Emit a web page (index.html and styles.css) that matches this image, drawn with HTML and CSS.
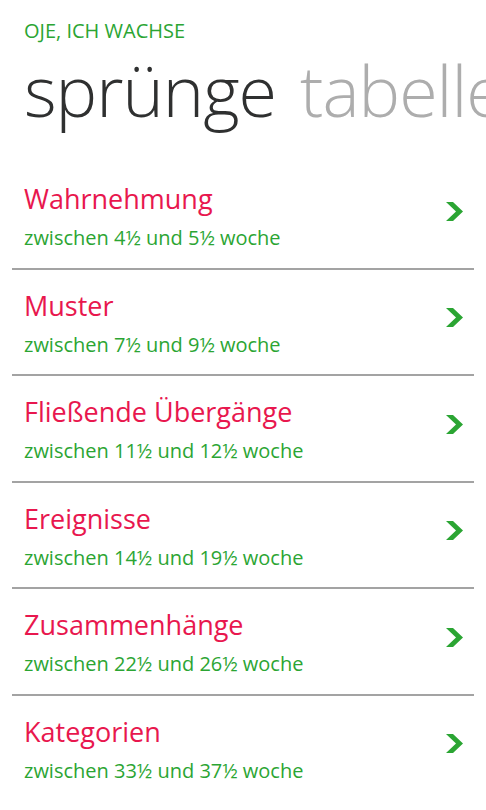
FILE: index.html
```html
<!DOCTYPE html>
<html>
<head>
    <meta name="viewport" content="width=device-width, initial-scale=1">
    <title>Oje, ich wachse</title>
    <link rel="stylesheet" href="styles.css">
</head>
<body>
<div class="app-title">OJE, ICH WACHSE</div>

<div class="pivot">
    <span class="pivot-item active">sprünge</span>
    <span class="pivot-item">tabelle</span>
</div>

<ul class="leaps">
    <li class="leap">
        <div class="leap-text">
            <div class="leap-name">Wahrnehmung</div>
            <div class="leap-weeks">zwischen 4½ und 5½ woche</div>
        </div>
        <svg class="chevron" width="17" height="19" viewBox="0 0 17 19"><path d="M0 0H7L17 9.5L7 19H0L10 9.5Z"/></svg>
    </li>
    <li class="leap">
        <div class="leap-text">
            <div class="leap-name">Muster</div>
            <div class="leap-weeks">zwischen 7½ und 9½ woche</div>
        </div>
        <svg class="chevron" width="17" height="19" viewBox="0 0 17 19"><path d="M0 0H7L17 9.5L7 19H0L10 9.5Z"/></svg>
    </li>
    <li class="leap">
        <div class="leap-text">
            <div class="leap-name">Fließende Übergänge</div>
            <div class="leap-weeks">zwischen 11½ und 12½ woche</div>
        </div>
        <svg class="chevron" width="17" height="19" viewBox="0 0 17 19"><path d="M0 0H7L17 9.5L7 19H0L10 9.5Z"/></svg>
    </li>
    <li class="leap">
        <div class="leap-text">
            <div class="leap-name">Ereignisse</div>
            <div class="leap-weeks">zwischen 14½ und 19½ woche</div>
        </div>
        <svg class="chevron" width="17" height="19" viewBox="0 0 17 19"><path d="M0 0H7L17 9.5L7 19H0L10 9.5Z"/></svg>
    </li>
    <li class="leap">
        <div class="leap-text">
            <div class="leap-name">Zusammenhänge</div>
            <div class="leap-weeks">zwischen 22½ und 26½ woche</div>
        </div>
        <svg class="chevron" width="17" height="19" viewBox="0 0 17 19"><path d="M0 0H7L17 9.5L7 19H0L10 9.5Z"/></svg>
    </li>
    <li class="leap">
        <div class="leap-text">
            <div class="leap-name">Kategorien</div>
            <div class="leap-weeks">zwischen 33½ und 37½ woche</div>
        </div>
        <svg class="chevron" width="17" height="19" viewBox="0 0 17 19"><path d="M0 0H7L17 9.5L7 19H0L10 9.5Z"/></svg>
    </li>
</ul>
</body>
</html>
```

FILE: styles.css
```css
html, body {
    overflow: hidden;
}

body {
    margin: 0;
    background-color: #ffffff;
    font-family: "Open Sans", "Noto Sans", sans-serif;
}

.app-title {
    padding: 18px 24px 0 24px;
    font-size: 20px;
    line-height: 26px;
    color: #2ba533;
}

.pivot {
    display: flex;
    gap: 24px;
    padding: 0 24px;
    white-space: nowrap;
    font-size: 70px;
    font-weight: 300;
    line-height: 92px;
    letter-spacing: -1px;
}

.pivot-item {
    color: #adadad;
}

.pivot-item.active {
    color: #2f3030;
}

.leaps {
    list-style: none;
    margin: 27px 12px 0 12px;
    padding: 0;
}

.leap {
    display: flex;
    align-items: center;
    justify-content: space-between;
    height: 104.5px;
    padding: 0 11px 0 12px;
    border-bottom: 2px solid #a3a3a3;
}

.leap:last-child {
    border-bottom: none;
}

.leap-name {
    font-size: 27px;
    line-height: 40px;
    color: #e8174e;
}

.leap-weeks {
    margin-top: 6px;
    font-size: 20px;
    line-height: 26px;
    color: #2ba533;
}

.chevron {
    fill: #2ba533;
    flex: none;
    margin-bottom: 8px;
}
```
